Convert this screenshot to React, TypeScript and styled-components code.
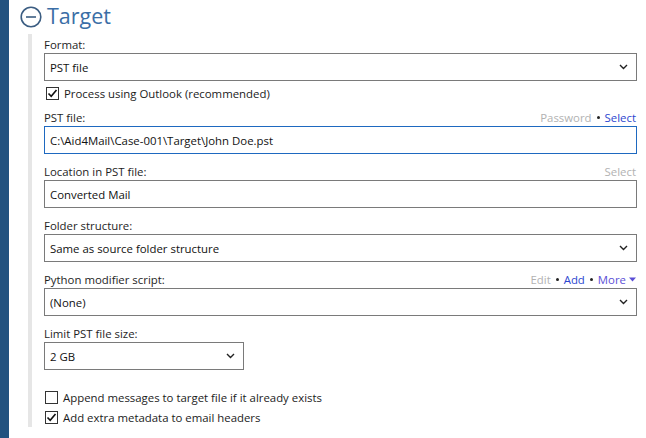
import styled, { createGlobalStyle } from "styled-components";

const GlobalStyle = createGlobalStyle`
  html, body {
    margin: 0;
    padding: 0;
    background: #ffffff;
  }
  body {
    font-family: "Open Sans", "Noto Sans", "Liberation Sans", sans-serif;
    font-size: 11.4px;
    color: #1b1b1b;
  }
`;

const Page = styled.div`
  display: flex;
  height: 438px;
  overflow: hidden;
`;

const SideBar = styled.div`
  width: 9px;
  flex-shrink: 0;
  background: #22527f;
`;

const Main = styled.div`
  flex: 1;
  padding: 0 9px 0 11px;
`;

const Header = styled.div`
  display: flex;
  align-items: center;
  gap: 5px;
  height: 34px;
`;

const Title = styled.h1`
  margin: 0 0 2px;
  font-size: 21.5px;
  font-weight: 400;
  color: #3a6ea6;
  line-height: 30px;
`;

const Section = styled.div`
  margin-left: 8px;
  border-left: 4px solid #e6e6e6;
  padding: 1px 0 0 12px;
  display: flex;
  flex-direction: column;
`;

const Field = styled.div<{ $gap?: number }>`
  display: flex;
  flex-direction: column;
  margin-bottom: ${(p) => p.$gap ?? 8}px;
`;

const LabelRow = styled.div`
  display: flex;
  justify-content: space-between;
  align-items: center;
  height: 18px;
`;

const Label = styled.span`
  color: #1e1e1e;
`;

const Actions = styled.div`
  display: flex;
  align-items: center;
  gap: 5px;
  padding-right: 1px;
`;

const Action = styled.span<{ $tone: "off" | "link" | "more" }>`
  color: ${(p) =>
    p.$tone === "off" ? "#b2b2b2" : p.$tone === "more" ? "#5b4fd6" : "#2c46cf"};
  display: inline-flex;
  align-items: center;
  gap: 3px;
`;

const Dot = styled.span`
  width: 3px;
  height: 3px;
  border-radius: 50%;
  background: #222;
`;

const Box = styled.div<{ $focused?: boolean; $width?: number }>`
  box-sizing: border-box;
  height: 28px;
  width: ${(p) => (p.$width ? `${p.$width}px` : "100%")};
  border: 1px solid ${(p) => (p.$focused ? "#1e69c0" : "#7a7a7a")};
  display: flex;
  align-items: center;
  justify-content: space-between;
  padding: 0 8px 0 5px;
  background: #fff;
  color: #111;
  white-space: nowrap;
`;

const CheckRow = styled.label<{ $indent?: number }>`
  display: flex;
  align-items: center;
  gap: 5px;
  height: 20px;
  padding-left: ${(p) => p.$indent ?? 1}px;
`;

const CheckBox = styled.span`
  box-sizing: border-box;
  width: 13px;
  height: 13px;
  border: 1px solid #333;
  background: #fff;
  display: flex;
  align-items: center;
  justify-content: center;
`;

const Spacer = styled.div<{ $h: number }>`
  height: ${(p) => p.$h}px;
`;

const Chevron = () => (
  <svg width="9" height="6" viewBox="0 0 9 6">
    <polyline points="1,1 4.5,4.5 8,1" fill="none" stroke="#222" strokeWidth="1.4" />
  </svg>
);

const Caret = () => (
  <svg width="7" height="5" viewBox="0 0 7 5">
    <polygon points="0,0.5 7,0.5 3.5,4.5" fill="#5b4fd6" />
  </svg>
);

const Check = ({ checked }: { checked?: boolean }) => (
  <CheckBox>
    {checked && (
      <svg width="11" height="11" viewBox="0 0 11 11">
        <polyline points="1.5,5.5 4.2,8.3 9.5,2" fill="none" stroke="#111" strokeWidth="1.6" />
      </svg>
    )}
  </CheckBox>
);

const CollapseIcon = () => (
  <svg width="22" height="22" viewBox="0 0 22 22">
    <circle cx="11" cy="11" r="9.8" fill="none" stroke="#3b5d82" strokeWidth="1.6" />
    <line x1="6" y1="11" x2="16" y2="11" stroke="#3b5d82" strokeWidth="1.6" />
  </svg>
);

const Select = ({ value, width }: { value: string; width?: number }) => (
  <Box $width={width}>
    <span>{value}</span>
    <Chevron />
  </Box>
);

export default function App() {
  return (
    <>
      <GlobalStyle />
      <Page>
        <SideBar />
        <Main>
          <Header>
            <CollapseIcon />
            <Title>Target</Title>
          </Header>
          <Section>
            <Field $gap={2}>
              <LabelRow>
                <Label>Format:</Label>
              </LabelRow>
              <Select value="PST file" />
            </Field>
            <CheckRow $indent={2}>
              <Check checked />
              <span>Process using Outlook (recommended)</span>
            </CheckRow>
            <Spacer $h={5} />
            <Field>
              <LabelRow>
                <Label>PST file:</Label>
                <Actions>
                  <Action $tone="off">Password</Action>
                  <Dot />
                  <Action $tone="link">Select</Action>
                </Actions>
              </LabelRow>
              <Box $focused>
                <span>C:\Aid4Mail\Case-001\Target\John Doe.pst</span>
              </Box>
            </Field>
            <Field>
              <LabelRow>
                <Label>Location in PST file:</Label>
                <Actions>
                  <Action $tone="off">Select</Action>
                </Actions>
              </LabelRow>
              <Box>
                <span>Converted Mail</span>
              </Box>
            </Field>
            <Field>
              <LabelRow>
                <Label>Folder structure:</Label>
              </LabelRow>
              <Select value="Same as source folder structure" />
            </Field>
            <Field>
              <LabelRow>
                <Label>Python modifier script:</Label>
                <Actions>
                  <Action $tone="off">Edit</Action>
                  <Dot />
                  <Action $tone="link">Add</Action>
                  <Dot />
                  <Action $tone="more">
                    More
                    <Caret />
                  </Action>
                </Actions>
              </LabelRow>
              <Select value="(None)" />
            </Field>
            <Field $gap={17}>
              <LabelRow>
                <Label>Limit PST file size:</Label>
              </LabelRow>
              <Select value="2 GB" width={200} />
            </Field>
            <CheckRow>
              <Check />
              <span>Append messages to target file if it already exists</span>
            </CheckRow>
            <CheckRow>
              <Check checked />
              <span>Add extra metadata to email headers</span>
            </CheckRow>
          </Section>
        </Main>
      </Page>
    </>
  );
}
